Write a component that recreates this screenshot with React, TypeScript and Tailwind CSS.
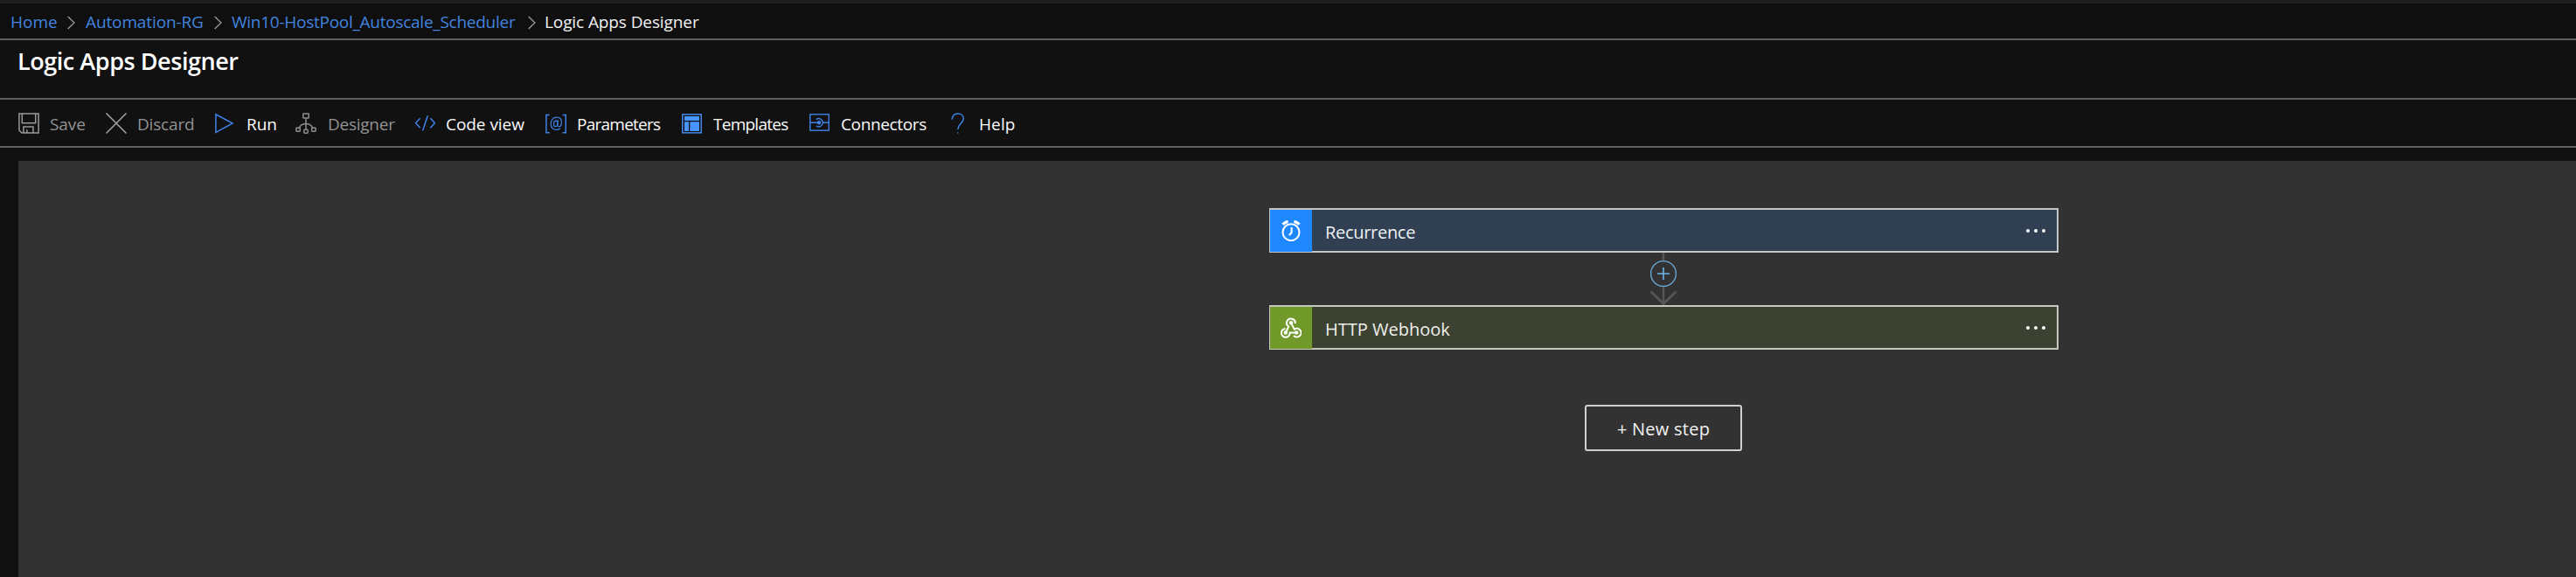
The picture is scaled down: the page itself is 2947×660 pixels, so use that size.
import type { ReactNode } from "react";

const iconClass = "block h-6 w-6 shrink-0";

function SaveIcon() {
  return (
    <svg className={iconClass} viewBox="0 0 24 24" fill="none" stroke="#9a9a9a" strokeWidth="1.5">
      <path d="M.9.9h22.2v22.2H4L.9 20z" />
      <path d="M4.3 1v10.7h15.4V1" />
      <path d="M5.900 23v-7.100h11V23M9.800 23v-3.800" />
    </svg>
  );
}

function DiscardIcon() {
  return (
    <svg className={iconClass} viewBox="0 0 24 24" fill="none" stroke="#a3a3a3" strokeWidth="1.5">
      <path d="M.5.5l23 23M23.5.5l-23 23" />
    </svg>
  );
}

function RunIcon() {
  return (
    <svg className={iconClass} viewBox="0 0 24 24" fill="none" stroke="#3f83e8" strokeWidth="1.5">
      <path d="M.9 1.8v20.6L20 12.1z" />
    </svg>
  );
}

function DesignerIcon() {
  return (
    <svg className={iconClass} viewBox="0 0 24 24" fill="none" stroke="#8f8f8f" strokeWidth="1.5">
      <rect x="8.800" y="1" width="6.400" height="5" rx=".6" />
      <path d="M12 6.200V19M12 12.600c-3.600 0-5.800 1-7.600 4.600M12 12.600c3.600 0 5.800 1 7.600 4.600" />
      <rect x=".9" y="17.200" width="4.400" height="4" rx=".6" />
      <rect x="18.700" y="17.200" width="4.400" height="4" rx=".6" />
      <rect x="9.800" y="19.200" width="4.400" height="4" rx="1" />
    </svg>
  );
}

function CodeIcon() {
  return (
    <svg className={iconClass} viewBox="0 0 24 24" fill="none" stroke="#3f83e8" strokeWidth="1.5">
      <path d="M6.600 6.200L1.600 11.700l5 5.500M18.400 6.200l5 5.500-5 5.500M15.300 3.200L9.600 20.600" />
    </svg>
  );
}

function ParametersIcon() {
  return (
    <svg className={iconClass} viewBox="0 0 24 24" fill="none" stroke="#3f83e8">
      <path strokeWidth="1.5" d="M4.700 2.500H.9v20.200h3.800M19.600 2.500h3.700v20.200h-3.700" />
      <path
        strokeWidth="1.2"
        d="M16.800 18c-1.200.9-2.600 1.400-4.300 1.400-4 0-6.300-2.700-6.300-6.600 0-4.400 2.700-7.700 6.600-7.700 3.600 0 5.600 2.400 5.600 5.800 0 3-1.300 4.900-3 4.900-1.200 0-1.700-.8-1.600-2.200l.5-5.100"
      />
      <path strokeWidth="1.2" d="M14.100 11.300c0-1.300-.6-2.200-1.700-2.200-1.700 0-2.900 1.900-2.900 4.100 0 1.600.7 2.500 1.800 2.500 1.400 0 2.500-1.500 2.600-3.500" />
    </svg>
  );
}

function TemplatesIcon() {
  return (
    <svg className={iconClass} viewBox="0 0 24 24" fill="none">
      <rect x=".8" y="1.900" width="21.400" height="21" stroke="#4a93fa" strokeWidth="1.4" />
      <path fill="#4894fe" d="M3 4h17v5H3zM3 10.300h5V21H3zM9.300 10.300H20V21H9.300z" />
    </svg>
  );
}

function ConnectorsIcon() {
  return (
    <svg className={iconClass} viewBox="0 0 24 24" fill="none" stroke="#3f83e8" strokeWidth="1.4">
      <rect x=".8" y="1.800" width="21.400" height="18.400" />
      <path d="M1 11.300h10M16 11.300h6" />
      <path d="M7.800 7.600A4.600 4.600 0 1 1 7.800 15" />
      <circle cx="11" cy="11.300" r="1.500" fill="#3f83e8" />
    </svg>
  );
}

function HelpIcon() {
  return (
    <svg className={iconClass} viewBox="0 0 24 24" fill="none" stroke="#3f83e8" strokeWidth="1.5">
      <path d="M6.300 7.800C6.300 3.500 8.800.9 12.700.9s6.600 2.300 6.600 5.700c0 5.400-6.500 6.200-6.500 12.400" />
      <circle cx="12.800" cy="23" r=".8" fill="#3f83e8" stroke="none" />
    </svg>
  );
}

function Chevron({ className }: { className: string }) {
  return (
    <svg className={`mt-0.5 block h-4 w-[9px] shrink-0 ${className}`} viewBox="0 0 9 16" fill="none" stroke="#a0a0a0" strokeWidth="1.2">
      <path d="M.7 1l7.300 7L.7 15" />
    </svg>
  );
}

function Tool({ icon, label, width, text, muted }: { icon: ReactNode; label: string; width: string; text: string; muted?: boolean }) {
  return (
    <button className={`flex shrink-0 items-center gap-3 text-left ${width}`}>
      {icon}
      <span className={`mt-0.5 ${text} ${muted ? "text-[#929292]" : "text-[#fafafa]"}`}>{label}</span>
    </button>
  );
}

function ClockIcon() {
  return (
    <svg className="block h-6 w-6" viewBox="0 0 24 24" fill="none" stroke="#fff">
      <circle cx="12" cy="13.700" r="9.500" strokeWidth="2" />
      <path strokeWidth="2" d="M12.600 8v6l-2.800 3" />
      <path strokeWidth="3.2" d="M2.600 4.800C4.200 2.800 6 1.700 8.600 1.300M21.400 4.800C19.800 2.800 18 1.700 15.400 1.300" />
    </svg>
  );
}

function WebhookIcon() {
  return (
    <svg className="block h-6 w-6" viewBox="0 0 24 24" fill="none" stroke="#fff" strokeWidth="2">
      <path d="M16.700 7.200A4.900 4.900 0 1 0 9.200 10.600L6 17.300" />
      <path d="M5.600 12.900A4.900 4.900 0 1 0 10.700 17.500H18" />
      <path d="M12 6.400l3.700 7.200A4.900 4.900 0 1 1 15 21" />
      <g fill="#fff" stroke="none">
        <circle cx="12" cy="6.200" r="2.200" />
        <circle cx="5.800" cy="17.400" r="2.200" />
        <circle cx="18.200" cy="17.400" r="2.200" />
      </g>
    </svg>
  );
}

function Card({ icon, label, tone, iconTone, text }: { icon: ReactNode; label: string; tone: string; iconTone: string; text: string }) {
  return (
    <div className={`flex h-[51px] w-[903px] border-2 border-l ${tone}`}>
      <div className={`flex h-12 w-12 shrink-0 items-center justify-center ${iconTone}`}>{icon}</div>
      <div className={`flex flex-1 items-center pt-1 pl-[15px] text-xl ${text}`}>{label}</div>
      <div className="flex items-center gap-[5px] pr-[13px]">
        <span className="h-1 w-1 rounded-full bg-white" />
        <span className="h-1 w-1 rounded-full bg-white" />
        <span className="h-1 w-1 rounded-full bg-white" />
      </div>
    </div>
  );
}

export default function App() {
  return (
    <div className="flex h-[660px] w-[2947px] flex-col overflow-hidden bg-[#111111] font-['Open_Sans','Noto_Sans',sans-serif] text-[19px] leading-7 whitespace-nowrap">
      <div className="h-1 shrink-0 bg-[#1f1f1f]" />
      <nav className="flex h-[42px] shrink-0 items-center border-b-2 border-[#5f5f5f] bg-[#0f0f0f] pt-0.5 pl-3 text-[#4284df]">
        <a className="w-[65px]">Home</a>
        <Chevron className="-mt-px mr-3" />
        <a className="w-[147px] tracking-[-0.12px]">Automation-RG</a>
        <Chevron className="-mt-px mr-[11px]" />
        <a className="w-[339px] tracking-[-0.26px]">Win10-HostPool_Autoscale_Scheduler</a>
        <Chevron className="-mt-px mr-[10px]" />
        <span className="tracking-[-0.1px] text-[#f3f3f3]">Logic Apps Designer</span>
      </nav>
      <header className="h-[68px] shrink-0 border-b-2 border-[#5f5f5f] pt-1.5 pl-5">
        <h1 className="text-[27px] leading-9 font-semibold tracking-[-0.45px] text-white">Logic Apps Designer</h1>
      </header>
      <div className="flex h-[55px] shrink-0 items-center border-b-2 border-[#5f5f5f] pl-[21px]">
        <Tool icon={<SaveIcon />} label="Save" width="w-[100px]" text="tracking-[-0.1px]" muted />
        <Tool icon={<DiscardIcon />} label="Discard" width="w-[125px]" text="tracking-[-0.18px]" muted />
        <Tool icon={<RunIcon />} label="Run" width="w-[92px]" text="tracking-[-0.1px]" />
        <Tool icon={<DesignerIcon />} label="Designer" width="w-[136px]" text="ml-px tracking-[-0.25px]" muted />
        <Tool icon={<CodeIcon />} label="Code view" width="w-[150px]" text="tracking-[-0.05px]" />
        <Tool icon={<ParametersIcon />} label="Parameters" width="w-[156px]" text="tracking-[-0.75px]" />
        <Tool icon={<TemplatesIcon />} label="Templates" width="w-[146px]" text="tracking-[-0.75px]" />
        <Tool icon={<ConnectorsIcon />} label="Connectors" width="w-[157px]" text="tracking-[-0.35px]" />
        <Tool icon={<HelpIcon />} label="Help" width="w-[80px]" text="ml-px tracking-[0.1px]" />
      </div>
      <main className="mt-[15px] ml-[21px] flex flex-1 flex-col items-start bg-[#323232] pt-[54px] pl-[1431px]">
        <div className="flex flex-col items-center">
          <Card
            icon={<ClockIcon />}
            label="Recurrence"
            tone="border-[#c2c6ca] bg-[#303f52] text-[#eef0f3]"
            iconTone="bg-[#1f88fe]"
            text="tracking-[-0.3px]"
          />
          <svg className="mr-px block h-[60px] w-8" viewBox="0 0 32 60" fill="none">
            <path stroke="#565656" strokeWidth="2.4" d="M16 0v58" />
            <path stroke="#565656" strokeWidth="2.8" d="M1.600 44.500L16 58.500l14.400-14" />
            <circle cx="16" cy="24" r="14.400" fill="#323232" stroke="#66a5cf" strokeWidth="1.4" />
            <path stroke="#6db4e6" strokeWidth="1.6" d="M16 17v14M9 24h14" />
          </svg>
          <Card
            icon={<WebhookIcon />}
            label="HTTP Webhook"
            tone="border-[#c4c8be] bg-[#3c4232] text-[#eff0ec]"
            iconTone="bg-[#70992a]"
            text="tracking-[0px]"
          />
          <button className="mt-[63px] mr-px flex h-[53px] w-[180px] items-center justify-center rounded-[3px] border-2 border-[#d0d0d0] pt-0.5 text-xl tracking-[0.25px] text-[#f3f3f3]">
            + New step
          </button>
        </div>
      </main>
    </div>
  );
}
